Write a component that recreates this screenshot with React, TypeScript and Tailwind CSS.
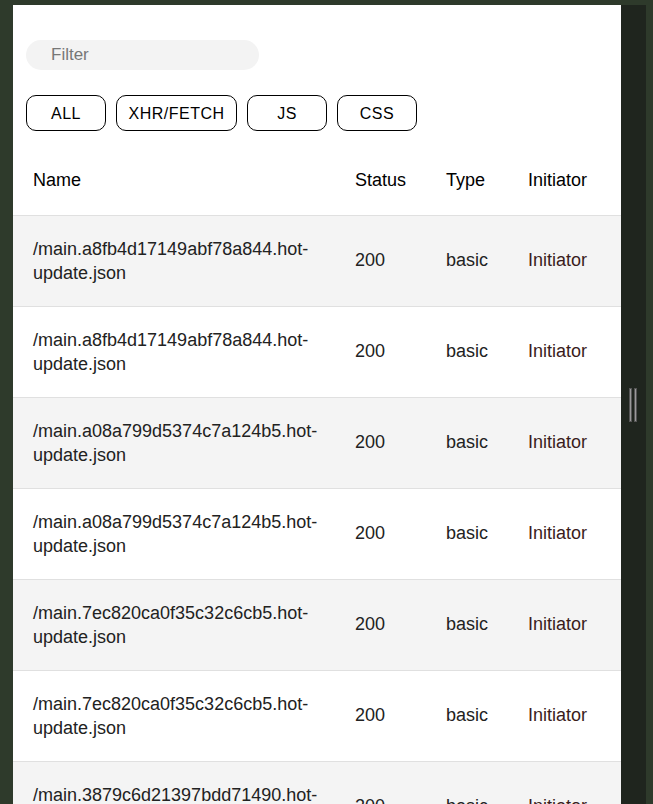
const rows = [
  "/main.a8fb4d17149abf78a844.hot-update.json",
  "/main.a8fb4d17149abf78a844.hot-update.json",
  "/main.a08a799d5374c7a124b5.hot-update.json",
  "/main.a08a799d5374c7a124b5.hot-update.json",
  "/main.7ec820ca0f35c32c6cb5.hot-update.json",
  "/main.7ec820ca0f35c32c6cb5.hot-update.json",
  "/main.3879c6d21397bdd71490.hot-update.json",
  "/main.3879c6d21397bdd71490.hot-update.json",
];

const filters = ["ALL", "XHR/FETCH", "JS", "CSS"];

function App() {
  return (
    <main className="h-screen overflow-hidden bg-[#2e3a2b] pt-[5px] pl-[13px] pr-[7px] flex font-['Liberation_Sans',Arial,sans-serif]">
      <section className="w-[608px] shrink-0 bg-white">
        <div className="pt-[35px] pl-[13px]">
          <input
            className="w-[233px] h-[30px] rounded-full bg-[#f3f3f3] pl-[25px] text-[17px] text-[#333] placeholder:text-[#777] outline-none"
            placeholder="Filter"
          />
        </div>
        <div className="flex gap-[10px] pl-[13px] mt-[25px]">
          {filters.map((f) => (
            <button
              key={f}
              className={`h-[36px] ${f === "XHR/FETCH" ? "w-[121px]" : "w-[80px]"} rounded-[10px] border border-black pt-[1px] text-[16px] tracking-[0.5px] text-black`}
            >
              {f}
            </button>
          ))}
        </div>
        <table className="mt-[15px] w-full table-fixed border-collapse text-[18px]">
          <colgroup>
            <col className="w-[322px]" />
            <col className="w-[91px]" />
            <col className="w-[82px]" />
            <col />
          </colgroup>
          <thead>
            <tr className="h-[69px] border-b border-[#e0e0e0] text-black text-left">
              <th className="font-normal pl-[20px]">Name</th>
              <th className="font-normal pl-[20px]">Status</th>
              <th className="font-normal pl-[20px]">Type</th>
              <th className="font-normal pl-[20px]">Initiator</th>
            </tr>
          </thead>
          <tbody>
            {rows.map((name, i) => (
              <tr
                key={i}
                className={`h-[91px] border-b border-[#e0e0e0] text-[#222] ${i % 2 === 0 ? "bg-[#f4f4f4]" : "bg-white"}`}
              >
                <td className="pl-[20px] pr-[10px] leading-[24px] break-words">{name}</td>
                <td className="pl-[20px]">200</td>
                <td className="pl-[20px]">basic</td>
                <td className="pl-[20px] text-[#3a1c1c]">Initiator</td>
              </tr>
            ))}
          </tbody>
        </table>
      </section>
      <div className="w-[25px] shrink-0 bg-[#1f251e] flex items-center justify-center">
        <div className="flex gap-[2px] pr-[1px]">
          <span className="block w-[3px] h-[34px] bg-[#9a9a9a] border border-[#555]" />
          <span className="block w-[3px] h-[34px] bg-[#9a9a9a] border border-[#555]" />
        </div>
      </div>
    </main>
  );
}

export default App;
